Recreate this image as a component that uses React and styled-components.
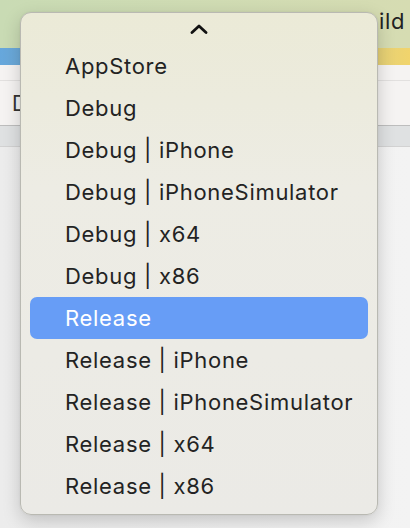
import React from 'react';
import styled, { createGlobalStyle } from 'styled-components';

const GlobalStyle = createGlobalStyle`
  html, body {
    margin: 0;
    padding: 0;
  }
  body {
    width: 410px;
    height: 528px;
    overflow: hidden;
    background: #efefef;
    font-family: Inter, 'Noto Sans', 'Liberation Sans', sans-serif;
  }
`;

const Page = styled.div`
  position: relative;
  width: 410px;
  height: 528px;
  display: flex;
  flex-direction: column;
  background: linear-gradient(90deg, #ececec 0%, #f3f3f3 100%);
`;

const TitleBar = styled.div`
  height: 48px;
  display: flex;
  justify-content: flex-end;
  align-items: center;
  padding-right: 5px;
  padding-bottom: 6px;
  box-sizing: border-box;
  background: linear-gradient(90deg, #c9dbb4 0%, #d6dcb2 100%);
  color: #222;
  font-size: 22px;
  letter-spacing: 0.6px;
`;

const Strip = styled.div`
  height: 17px;
  background: linear-gradient(90deg, #66a7dc 0%, #9cbcb8 45%, #f1d46c 100%);
`;

const Sheet = styled.div`
  background: #f5f3f2;
  display: flex;
  flex-direction: column;
`;

const SheetRow = styled.div`
  height: ${p => p.$h}px;
  display: flex;
  align-items: center;
  padding-left: 12px;
  border-bottom: 1px solid ${p => p.$line};
  color: #333;
  font-size: 21px;
`;

const Band = styled.div`
  height: 20px;
  background: #dfe1e2;
  border-bottom: 1px solid #d2d2d2;
`;

const Menu = styled.div`
  position: absolute;
  left: 20px;
  top: 12px;
  width: 358px;
  height: 503px;
  box-sizing: border-box;
  border: 1px solid #b9b9b2;
  border-radius: 11px;
  background: linear-gradient(180deg, #ebead7 0%, #edece4 35%, #ebeae6 100%);
  box-shadow: 0 6px 18px rgba(0, 0, 0, 0.18), 0 0 2px rgba(0, 0, 0, 0.08);
  display: flex;
  flex-direction: column;
  padding: 0 9px;
`;

const ScrollUp = styled.div`
  height: 32px;
  display: flex;
  justify-content: center;
  align-items: center;
`;

const Item = styled.div`
  height: 42px;
  flex-shrink: 0;
  display: flex;
  align-items: center;
  padding-left: 35px;
  border-radius: 7px;
  font-size: 22px;
  letter-spacing: 0.7px;
  color: ${p => (p.$active ? '#ffffff' : '#232323')};
  background: ${p => (p.$active ? '#679df6' : 'transparent')};
`;

const items = [
  'AppStore',
  'Debug',
  'Debug | iPhone',
  'Debug | iPhoneSimulator',
  'Debug | x64',
  'Debug | x86',
  'Release',
  'Release | iPhone',
  'Release | iPhoneSimulator',
  'Release | x64',
  'Release | x86',
];

export default function App() {
  return (
    <>
      <GlobalStyle />
      <Page>
        <TitleBar>ild</TitleBar>
        <Strip />
        <Sheet>
          <SheetRow $h={15} $line="#e2e0df" />
          <SheetRow $h={44} $line="#bdbdbd">D</SheetRow>
        </Sheet>
        <Band />
        <Menu>
          <ScrollUp>
            <svg width="18" height="10" viewBox="0 0 18 10" aria-hidden="true">
              <path
                d="M2 8.5 L9 2 L16 8.5"
                fill="none"
                stroke="#111"
                strokeWidth="2.8"
                strokeLinecap="round"
                strokeLinejoin="round"
              />
            </svg>
          </ScrollUp>
          {items.map(name => (
            <Item key={name} $active={name === 'Release'}>
              {name}
            </Item>
          ))}
        </Menu>
      </Page>
    </>
  );
}
